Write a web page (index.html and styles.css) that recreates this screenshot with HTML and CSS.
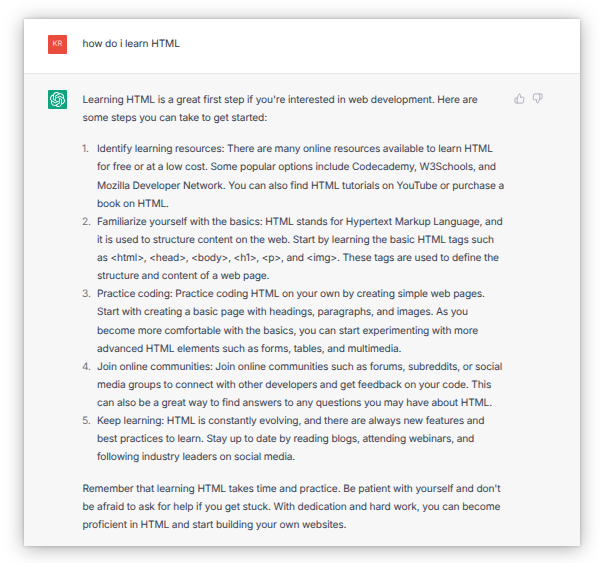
FILE: index.html
```html
<!DOCTYPE html>
<html lang="en">
<head>
<meta charset="UTF-8">
<meta name="viewport" content="width=device-width, initial-scale=1.0">
<title>how do i learn HTML</title>
<link rel="stylesheet" href="styles.css">
</head>

<body>
<main class="chat">
    <div class="message user">
        <div class="avatar">KR</div>
        <div class="text"><p>how do i learn HTML</p></div>
    </div>
    <div class="message assistant">
        <div class="avatar">
            <svg viewBox="0 0 24 24" fill="currentColor"><path d="M22.2819 9.8211a5.9847 5.9847 0 0 0-.5157-4.9108 6.0462 6.0462 0 0 0-6.5098-2.9A6.0651 6.0651 0 0 0 4.9807 4.1818a5.9847 5.9847 0 0 0-3.9977 2.9 6.0462 6.0462 0 0 0 .7427 7.0966 5.98 5.98 0 0 0 .511 4.9107 6.051 6.051 0 0 0 6.5146 2.9001A5.9847 5.9847 0 0 0 13.2599 24a6.0557 6.0557 0 0 0 5.7718-4.2058 5.9894 5.9894 0 0 0 3.9977-2.9001 6.0557 6.0557 0 0 0-.7475-7.0729zm-9.022 12.6081a4.4755 4.4755 0 0 1-2.8764-1.0408l.1419-.0804 4.7783-2.7582a.7948.7948 0 0 0 .3927-.6813v-6.7369l2.02 1.1686a.071.071 0 0 1 .038.052v5.5826a4.504 4.504 0 0 1-4.4945 4.4944zm-9.6607-4.1254a4.4708 4.4708 0 0 1-.5346-3.0137l.142.0852 4.783 2.7582a.7712.7712 0 0 0 .7806 0l5.8428-3.3685v2.3324a.0804.0804 0 0 1-.0332.0615L9.74 19.9502a4.4992 4.4992 0 0 1-6.1408-1.6464zM2.3408 7.8956a4.485 4.485 0 0 1 2.3655-1.9728V11.6a.7664.7664 0 0 0 .3879.6765l5.8144 3.3543-2.0201 1.1685a.0757.0757 0 0 1-.071 0l-4.8303-2.7865A4.504 4.504 0 0 1 2.3408 7.872zm16.5963 3.8558L13.1038 8.364 15.1192 7.2a.0757.0757 0 0 1 .071 0l4.8303 2.7913a4.4944 4.4944 0 0 1-.6765 8.1042v-5.6772a.79.79 0 0 0-.407-.667zm2.0107-3.0231l-.142-.0852-4.7735-2.7818a.7759.7759 0 0 0-.7854 0L9.409 9.2297V6.8974a.0662.0662 0 0 1 .0284-.0615l4.8303-2.7866a4.4992 4.4992 0 0 1 6.6802 4.66zM8.3065 12.863l-2.02-1.1638a.0804.0804 0 0 1-.038-.0567V6.0742a4.4992 4.4992 0 0 1 7.3757-3.4537l-.142.0805L8.704 5.459a.7948.7948 0 0 0-.3927.6813zm1.0976-2.3654l2.602-1.4998 2.6069 1.4998v2.9994l-2.5974 1.4997-2.6067-1.4997Z"/></svg>
        </div>
        <div class="text">
            <p>Learning HTML is a great first step if you're interested in web development. Here are<br>
            some steps you can take to get started:</p>
            <ol>
                <li>Identify learning resources: There are many online resources available to learn HTML<br>
                for free or at a low cost. Some popular options include Codecademy, W3Schools, and<br>
                Mozilla Developer Network. You can also find HTML tutorials on YouTube or purchase a<br>
                book on HTML.</li>
                <li>Familiarize yourself with the basics: HTML stands for Hypertext Markup Language, and<br>
                it is used to structure content on the web. Start by learning the basic HTML tags such<br>
                as &lt;html&gt;, &lt;head&gt;, &lt;body&gt;, &lt;h1&gt;, &lt;p&gt;, and &lt;img&gt;. These tags are used to define the<br>
                structure and content of a web page.</li>
                <li>Practice coding: Practice coding HTML on your own by creating simple web pages.<br>
                Start with creating a basic page with headings, paragraphs, and images. As you<br>
                become more comfortable with the basics, you can start experimenting with more<br>
                advanced HTML elements such as forms, tables, and multimedia.</li>
                <li>Join online communities: Join online communities such as forums, subreddits, or social<br>
                media groups to connect with other developers and get feedback on your code. This<br>
                can also be a great way to find answers to any questions you may have about HTML.</li>
                <li>Keep learning: HTML is constantly evolving, and there are always new features and<br>
                best practices to learn. Stay up to date by reading blogs, attending webinars, and<br>
                following industry leaders on social media.</li>
            </ol>
            <p>Remember that learning HTML takes time and practice. Be patient with yourself and don't<br>
            be afraid to ask for help if you get stuck. With dedication and hard work, you can become<br>
            proficient in HTML and start building your own websites.</p>
        </div>
        <div class="rating">
            <svg viewBox="0 0 24 24"><path d="M14 9V5a3 3 0 0 0-3-3l-4 9v11h11.28a2 2 0 0 0 2-1.7l1.38-9a2 2 0 0 0-2-2.3zM7 22H4a2 2 0 0 1-2-2v-7a2 2 0 0 1 2-2h3"/></svg>
            <svg viewBox="0 0 24 24"><path d="M10 15v4a3 3 0 0 0 3 3l4-9V2H5.72a2 2 0 0 0-2 1.7l-1.38 9a2 2 0 0 0 2 2.3zm7-13h2.67A2.31 2.31 0 0 1 22 4v7a2.31 2.31 0 0 1-2.33 2H17"/></svg>
        </div>
    </div>
</main>
</body>
</html>
```
FILE: styles.css
```css
body {
    box-sizing: border-box;
    height: 563px;
    margin: 0;
    padding: 19px 0 0 24px;
    background: #fff;
}
.chat {
    width: 556px;
    height: 527px;
    display: flex;
    flex-direction: column;
    background: #f7f7f7;
    box-shadow: 0 0 3px rgba(0,0,0,.22), 0 2px 18px rgba(0,0,0,.34);
    font: 10.2px/18.12px Inter, "Liberation Sans", sans-serif;
    letter-spacing: -.14px;
    text-rendering: geometricPrecision;
    color: #374151;
}
.message { display: flex; box-sizing: border-box; padding-left: 24px; }
.user { height: 55px; padding-top: 16px; background: #fff; border-bottom: 1px solid #e8e8ea; color: #343541; }
.assistant { flex: 1; padding-top: 16px; }
.avatar {
    flex: none;
    display: flex;
    align-items: center;
    justify-content: center;
    width: 19px;
    height: 19px;
    margin-right: 15.5px;
    border-radius: 1px;
    background: #10a37f;
    color: #fff;
}
.user .avatar { background: #e94b3c; color: #fbd5d0; font-size: 7.5px; letter-spacing: 0; }
.avatar svg { width: 15px; height: 15px; }
.text { width: 424px; padding-top: .7px; white-space: nowrap; }
.text p { margin: 0; }
.user .text { padding-top: 0; }
.text ol { margin: 13.4px 0 13.6px; padding-left: 14.5px; list-style: none; counter-reset: step; letter-spacing: -.16px; }
.text li { counter-increment: step; }
.text li::before {
    content: counter(step) ".";
    display: inline-block;
    width: 15px;
    margin-left: -15px;
    color: #6b7280;
}
.rating { display: flex; gap: 7.5px; margin: 2.5px 0 0 7px; }
.rating svg {
    width: 11px;
    height: 11px;
    fill: none;
    stroke: #acacbe;
    stroke-width: 2;
    stroke-linecap: round;
    stroke-linejoin: round;
}
```
